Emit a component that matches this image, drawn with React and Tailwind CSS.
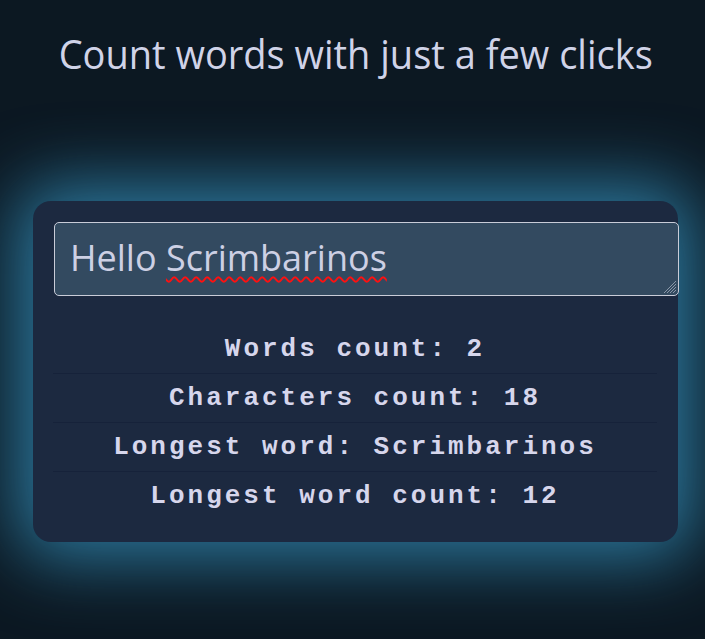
export default function App() {
  const stats = [
    "Words count: 2",
    "Characters count: 18",
    "Longest word: Scrimbarinos",
    "Longest word count: 12",
  ];
  return (
    <div className="min-h-[639px] w-full bg-[#0c1822] flex flex-col items-center overflow-hidden pl-[6px]">
      <h1 className="mt-[26px] text-[40px] leading-[56px] text-[#d0d3e8] font-['Open_Sans',sans-serif] whitespace-nowrap scale-x-95">
        Count words with just a few clicks
      </h1>
      <div className="mt-[119px] w-[645px] rounded-[18px] bg-[#1c2940] p-[21px] shadow-[0_0_70px_16px_rgba(50,140,182,0.85)]">
        <div className="relative w-[625px] h-[74px] rounded-[5px] border border-[#c9ccd8] bg-[#334a60] px-[15px] pt-[13px]">
          <span className="text-[36px] leading-[44px] text-[#cdd0e4] font-['Open_Sans',sans-serif] whitespace-nowrap">
            Hello{" "}
            <span className="underline decoration-wavy decoration-[#ff1010] decoration-[1.5px] underline-offset-[5px]">
              Scrimbarinos
            </span>
          </span>
          <svg className="absolute right-[1px] bottom-[1px]" width="14" height="14" viewBox="0 0 14 14">
            <g stroke="#8a97a8" strokeWidth="1">
              <line x1="13" y1="1" x2="1" y2="13" />
              <line x1="13" y1="4" x2="4" y2="13" />
              <line x1="13" y1="7" x2="7" y2="13" />
              <line x1="13" y1="10" x2="10" y2="13" />
            </g>
          </svg>
        </div>
        <div className="mt-[29px] -ml-[1px] w-[604px] divide-y divide-[#16223a]">
          {stats.map((s) => (
            <div
              key={s}
              className="h-[49px] flex items-center justify-center text-[26px] font-bold tracking-[3px] text-[#d6d6ec] font-['Liberation_Mono',monospace] whitespace-pre"
            >
              {s}
            </div>
          ))}
        </div>
      </div>
    </div>
  );
}
